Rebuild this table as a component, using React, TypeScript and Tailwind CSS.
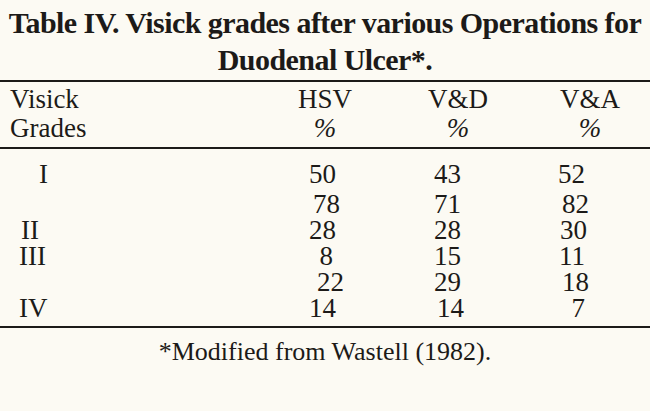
type Row = { grade: string; gradeClass: string; cells: [string, string][]; rowClass: string }

// cells: [value, extra classes for small offsets seen in the scan]
const rows: Row[] = [
  { grade: "I", gradeClass: "pl-[39px]", rowClass: "pb-[4px]", cells: [["50", ""], ["43", ""], ["52", "pr-[2px]"]] },
  { grade: "", gradeClass: "", rowClass: "", cells: [["78", "-mr-[4px]"], ["71", ""], ["82", "-mr-[2px]"]] },
  { grade: "II", gradeClass: "pl-[21px]", rowClass: "", cells: [["28", ""], ["28", ""], ["30", ""]] },
  { grade: "III", gradeClass: "pl-[19px]", rowClass: "", cells: [["8", "pr-[3px]"], ["15", ""], ["11", "pr-[2px]"]] },
  { grade: "", gradeClass: "", rowClass: "", cells: [["22", "-mr-[8px]"], ["29", ""], ["18", "-mr-[2px]"]] },
  { grade: "IV", gradeClass: "pl-[19px]", rowClass: "", cells: [["14", ""], ["14", "-mr-[3px]"], ["7", "pr-[2px]"]] },
]

export default function App() {
  return (
    <div
      className="w-[650px] h-[411px] overflow-hidden bg-[#fcfaf3] text-[#1c1a18]"
      style={{ fontFamily: '"Liberation Serif", "Times New Roman", serif' }}
    >
      <div className="pt-[4px] pb-[2px] text-center font-bold text-[30px] leading-[37px] tracking-[-0.55px]">
        <div>Table IV. Visick grades after various Operations for</div>
        <div>Duodenal Ulcer*.</div>
      </div>

      <div className="h-[2px] bg-[#1c1a18]" />

      <div className="grid grid-cols-[260px_130px_130px_1fr] pt-[3px] pb-[4px] text-[27px] leading-[29px]">
        <div className="pl-[10px]">Visick</div>
        <div className="text-center">HSV</div>
        <div className="text-center pl-[6px]">V&amp;D</div>
        <div className="text-center pl-[10px]">V&amp;A</div>
        <div className="pl-[10px]">Grades</div>
        <div className="text-center italic">%</div>
        <div className="text-center pl-[6px] italic">%</div>
        <div className="text-center pl-[10px] italic">%</div>
      </div>

      <div className="h-[2px] bg-[#1c1a18]" />

      <div className="grid grid-cols-[260px_76px_125px_126px_1fr] pt-[12px] pb-[5px] text-[27px] leading-[26px]">
        {rows.map((r, i) => (
          <div key={i} className="contents">
            <div className={`${r.gradeClass} ${r.rowClass}`}>{r.grade}</div>
            {r.cells.map(([v, cls], j) => (
              <div key={j} className={`text-right ${cls} ${r.rowClass}`}>
                {v}
              </div>
            ))}
            <div className={r.rowClass} />
          </div>
        ))}
      </div>

      <div className="h-[2px] bg-[#1c1a18]" />

      <div className="pt-[9px] text-center text-[26px] leading-[30px]">*Modified from Wastell (1982).</div>
    </div>
  )
}
